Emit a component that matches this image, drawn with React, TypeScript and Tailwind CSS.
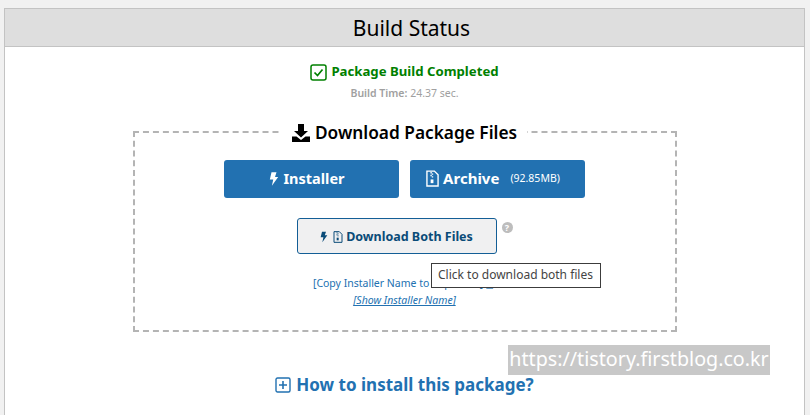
const font = "font-['Noto_Sans','Open_Sans',sans-serif]"

function BoltIcon({ className }: { className: string }) {
  return (
    <svg viewBox="0 0 12 16" className={className} fill="currentColor">
      <path d="M3 0h6L7.2 5.5H11L3.5 16l1.6-7.5H1z" />
    </svg>
  )
}

function ZipIcon({ className }: { className: string }) {
  return (
    <svg viewBox="0 0 14 18" className={className} fill="none" stroke="currentColor" strokeWidth="1.5">
      <path d="M1 1h8l4 4v12H1z" />
      <path d="M5.5 2v1.5M7 3.5V5M5.5 5v1.5M7 6.5V8" />
      <rect x="5" y="10" width="3" height="4" fill="currentColor" stroke="none" />
    </svg>
  )
}

function CopyGlyph() {
  return (
    <svg viewBox="0 0 12 12" className="inline h-[10px] w-[10px]" fill="none" stroke="currentColor" strokeWidth="1.2">
      <rect x="1" y="3" width="7" height="8" />
      <path d="M4 3V1h7v8H8" />
    </svg>
  )
}

export default function App() {
  return (
    <div className={`${font} h-[415px] w-[810px] overflow-hidden bg-[#f1f1f1] pt-2 pl-1 pr-[5px]`}>
      <div className="h-[420px] border-x border-t border-[#c3c3c3] bg-white">
        <div className="flex h-[38px] items-center justify-center border-b border-[#c3c3c3] bg-[#dedede] pt-[3px] pl-[14px] text-[21px] text-black">
          Build Status
        </div>

        <div className="flex flex-col items-center">
          <div className="mt-[15px] flex h-5 items-center gap-[4px] text-[13.2px] font-bold text-[#008000]">
            <svg viewBox="0 0 17 17" className="h-[17px] w-[17px]" fill="none" stroke="currentColor">
              <rect x="1" y="1" width="15" height="15" rx="2" strokeWidth="1.5" />
              <path d="M4.5 8.5l3 3 5-6" strokeWidth="1.7" />
            </svg>
            Package Build Completed
          </div>
          <p className="mt-[4px] text-[10.5px] text-[#a0a0a0]">
            <span className="font-semibold">Build Time:</span> 24.37 sec.
          </p>

          <fieldset className="mt-4 h-[214px] w-[544px] border-2 border-dashed border-[#b4b4b4] text-center">
            <legend className="mx-auto flex items-center gap-[5px] px-[10px] pt-[2px] text-[17.3px] font-semibold text-black">
              <svg viewBox="0 0 18 18" className="h-[18px] w-[18px]" fill="currentColor">
                <path d="M6 0h6v7h4l-7 6.5L2 7h4z" />
                <path d="M0 12.5h4.5L9 16l4.5-3.5H18V18H0z" />
              </svg>
              Download Package Files
            </legend>

            <div className="mt-[14px] flex justify-center gap-[11px]">
              <button className="flex h-[38px] w-[175px] items-center justify-center gap-[4px] rounded-[3px] bg-[#2271b1] pr-[9px] text-[14.5px] font-bold text-white">
                <BoltIcon className="h-[16px] w-[10px]" />
                Installer
              </button>
              <button className="flex h-[38px] w-[175px] items-center justify-center gap-[4px] rounded-[3px] bg-[#2271b1] pr-[9px] text-[15px] font-bold text-white">
                <ZipIcon className="h-[17px] w-[13px]" />
                Archive
                <span className="ml-[7px] text-[10.5px] font-normal">(92.85MB)</span>
              </button>
            </div>

            <div className="relative mt-5 flex justify-center">
              <button className="mr-4 flex h-9 w-[200px] items-center justify-center gap-[3px] rounded-[3px] border border-[#135e96] bg-[#f0f0f1] pt-[3px] text-[12.5px] font-bold text-[#0a4b78]">
                <BoltIcon className="h-[12px] w-[8px]" />
                <ZipIcon className="ml-[2px] h-[12px] w-[10px]" />
                Download Both Files
              </button>
              <span className="absolute top-[4px] left-[367px] flex h-[11px] w-[11px] items-center justify-center rounded-full bg-[#bdbdbd] text-[9px] leading-none font-bold text-white">
                ?
              </span>
              <div className="absolute top-[45px] left-[296px] z-10 flex h-[25px] w-[170px] items-center justify-center border border-[#3c3c3c] bg-white text-[12px] whitespace-nowrap text-[#444]">
                Click to download both files
              </div>
            </div>

            <p className="mt-[22px] text-[10.5px] text-[#2271b1]">
              [Copy Installer Name to Clipboard] <CopyGlyph />
            </p>
            <p className="mt-[2px] text-[10.5px] text-[#2271b1] italic underline">[Show Installer Name]</p>
          </fieldset>

          <div className="mt-10 flex items-center gap-[5px] text-[17px] font-bold text-[#2271b1]">
            <svg viewBox="0 0 16 16" className="h-4 w-4" fill="none" stroke="currentColor">
              <rect x="1" y="1" width="14" height="14" rx="1.5" strokeWidth="1.4" />
              <path d="M8 4v8M4 8h8" strokeWidth="1.6" />
            </svg>
            How to install this package?
          </div>
        </div>
      </div>

      <div className="absolute top-[345px] left-[508px] flex h-[30px] w-[262px] items-center justify-center bg-[#c8c8c8] pb-[3px] text-[19.7px] whitespace-nowrap text-white">
        https://tistory.firstblog.co.kr
      </div>
    </div>
  )
}
